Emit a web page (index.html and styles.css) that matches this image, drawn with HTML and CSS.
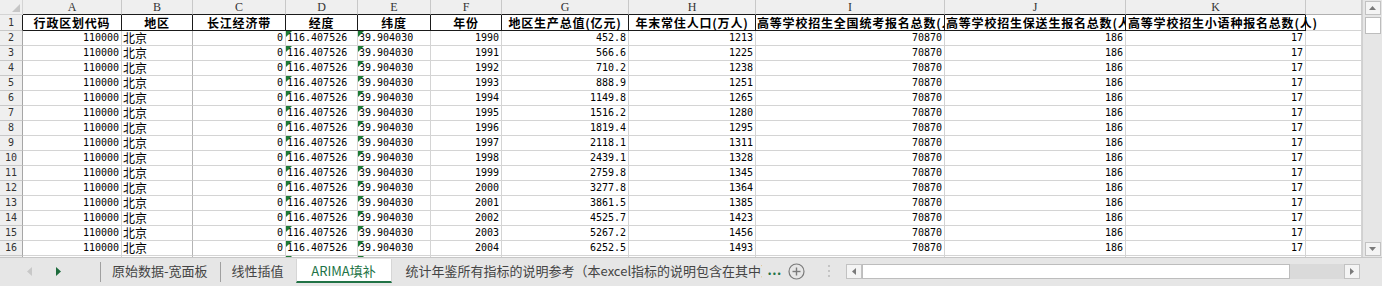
FILE: index.html
```html
<!DOCTYPE html>
<html lang="zh-CN">
<head>
    <meta charset="UTF-8">
    <title>ARIMA填补</title>
    <link rel="stylesheet" href="styles.css">
</head>
<body>
    <div class="workbook">
        <div class="sheet-area">
            <div class="sheet" id="sheet">
                <div class="corner"><span class="select-all"></span></div>
                <div class="col-head">A</div>
                <div class="col-head sep-dark">B</div>
                <div class="col-head">C</div>
                <div class="col-head">D</div>
                <div class="col-head">E</div>
                <div class="col-head">F</div>
                <div class="col-head">G</div>
                <div class="col-head">H</div>
                <div class="col-head">I</div>
                <div class="col-head">J</div>
                <div class="col-head">K</div>
                <div class="col-head col-last"></div>

                <div class="row-head row-first">1</div>
                <div class="title">行政区划代码</div>
                <div class="title">地区</div>
                <div class="title">长江经济带</div>
                <div class="title">经度</div>
                <div class="title">纬度</div>
                <div class="title">年份</div>
                <div class="title">地区生产总值(亿元)</div>
                <div class="title">年末常住人口(万人)</div>
                <div class="title title-clip">高等学校招生全国统考报名总数(人)</div>
                <div class="title title-clip">高等学校招生保送生报名总数(人)</div>
                <div class="title title-spill">高等学校招生小语种报名总数(人)</div>
                <div class="cell"></div>
            </div>

            <div class="vscroll">
                <div class="sb-btn">
                    <svg width="7" height="4" viewBox="0 0 7 4"><polygon points="0,4 7,4 3.5,0" fill="#7a7a7a"/></svg>
                </div>
                <div class="sb-thumb"></div>
                <div class="sb-track"></div>
                <div class="sb-btn">
                    <svg width="7" height="4" viewBox="0 0 7 4"><polygon points="0,0 7,0 3.5,4" fill="#7a7a7a"/></svg>
                </div>
            </div>
        </div>

        <div class="tabbar">
            <div class="tab-nav">
                <svg width="5" height="9" viewBox="0 0 5 9"><polygon points="5,0 5,9 0,4.5" fill="#c8c8c8"/></svg>
                <svg width="5" height="9" viewBox="0 0 5 9"><polygon points="0,0 0,9 5,4.5" fill="#1d6b3c"/></svg>
            </div>
            <div class="tab-sep"></div>
            <div class="tab">原始数据-宽面板</div>
            <div class="tab-sep"></div>
            <div class="tab">线性插值</div>
            <div class="tab tab-active">ARIMA填补</div>
            <div class="tab tab-long">统计年鉴所有指标的说明参考（本excel指标的说明包含在其中）</div>
            <div class="tab-more">...</div>
            <div class="tab-add">
                <svg width="17" height="17" viewBox="0 0 17 17">
                    <circle cx="8.5" cy="8.5" r="7.5" fill="none" stroke="#7a7a7a" stroke-width="1.2"/>
                    <line x1="8.5" y1="4.5" x2="8.5" y2="12.5" stroke="#7a7a7a" stroke-width="1.4"/>
                    <line x1="4.5" y1="8.5" x2="12.5" y2="8.5" stroke="#7a7a7a" stroke-width="1.4"/>
                </svg>
            </div>
            <div class="tab-grip"><span></span><span></span><span></span></div>
            <div class="hscroll">
                <div class="sb-btn">
                    <svg width="4" height="7" viewBox="0 0 4 7"><polygon points="4,0 4,7 0,3.5" fill="#7a7a7a"/></svg>
                </div>
                <div class="hs-thumb"></div>
                <div class="hs-track"></div>
                <div class="sb-btn">
                    <svg width="4" height="7" viewBox="0 0 4 7"><polygon points="0,0 0,7 4,3.5" fill="#7a7a7a"/></svg>
                </div>
            </div>
        </div>
    </div>

    <script>
        // data rows 2..16 (北京 1990-2004), row 17 only peeks in under the tabs
        const gdp = ['452.8', '566.6', '710.2', '888.9', '1149.8', '1516.2', '1819.4', '2118.1',
                     '2439.1', '2759.8', '3277.8', '3861.5', '4525.7', '5267.2', '6252.5'];
        const pop = [1213, 1225, 1238, 1251, 1265, 1280, 1295, 1311, 1328, 1345, 1364, 1385, 1423, 1456, 1493];
        const sheet = document.getElementById('sheet');

        function addCell(cls, text) {
            const div = document.createElement('div');
            div.className = cls;
            div.textContent = text;
            sheet.appendChild(div);
        }

        gdp.forEach((value, i) => {
            addCell('row-head', i + 2);
            addCell('cell num', '110000');
            addCell('cell zh sep-dark', '北京');
            addCell('cell num', '0');
            addCell('cell flag', '116.407526');
            addCell('cell flag', '39.904030');
            addCell('cell num', 1990 + i);
            addCell('cell num', value);
            addCell('cell num', pop[i]);
            addCell('cell num', '70870');
            addCell('cell num', '186');
            addCell('cell num', '17');
            addCell('cell', '');
        });

        // partial row 17: gridlines and the green markers only
        ['row-head', 'cell', 'cell sep-dark', 'cell', 'cell flag', 'cell flag',
         'cell', 'cell', 'cell', 'cell', 'cell', 'cell', 'cell'].forEach(cls => addCell(cls, ''));
    </script>
</body>
</html>
```

FILE: styles.css
```css
/* Base */
* {
    margin: 0;
    padding: 0;
    box-sizing: border-box;
}

body {
    width: 1382px;
    height: 286px;
    overflow: hidden;
    background: #e6e6e6;
    font-family: 'Noto Sans CJK SC', sans-serif;
}

.workbook {
    display: flex;
    flex-direction: column;
    height: 286px;
}

/* Sheet grid */
.sheet-area {
    display: flex;
    height: 258px;
    border-bottom: 1px solid #c6c6c6;
}

.sheet {
    width: 1362px;
    overflow: hidden;
    background: #fff;
    display: grid;
    grid-template-columns: 23px 99px 71px 93px 72px 73px 71px 127px 127px 189px 181px 180px 56px;
    grid-template-rows: 15px 16px;
    grid-auto-rows: 15px;
}

.sheet > div {
    border-right: 1px solid #d4d4d4;
    border-bottom: 1px solid #d4d4d4;
    white-space: nowrap;
}

.corner {
    position: relative;
    background: #efefef;
}

.corner .select-all {
    position: absolute;
    right: 2px;
    bottom: 2px;
    width: 0;
    height: 0;
    border-left: 8px solid transparent;
    border-bottom: 8px solid #c6c6c6;
}

.sheet > .col-head {
    background: #efefef;
    border-right-color: #c8c8c8;
    border-bottom-color: #1a1a1a;
    text-align: center;
    font-family: 'Liberation Serif', serif;
    font-size: 12px;
    line-height: 14px;
    color: #333;
}

.sheet > .col-last {
    border-bottom-color: #b0b0b0;
}

.sheet > .row-head {
    background: #efefef;
    border-right-color: #a6a6a6;
    border-bottom-color: #c8c8c8;
    text-align: center;
    font-family: 'DejaVu Sans Mono', monospace;
    font-size: 10px;
    line-height: 14px;
    color: #333;
}

.sheet > .row-first {
    line-height: 15px;
    border-right-color: #1a1a1a;
}

/* Header row 1 */
.sheet > .title {
    border-right-color: #1a1a1a;
    border-bottom-color: #1a1a1a;
    text-align: center;
    font-weight: bold;
    font-size: 12px;
    letter-spacing: 0.8px;
    line-height: 15px;
    color: #000;
}

.sheet > .title-clip {
    text-align: left;
    padding-left: 1px;
    overflow: hidden;
}

.sheet > .title-spill {
    text-align: left;
    padding-left: 2px;
}

/* Data cells */
.cell {
    font-size: 12px;
    line-height: 14px;
    color: #000;
}

.num {
    text-align: right;
    padding-right: 2px;
    font-family: 'DejaVu Sans Mono', monospace;
    font-size: 10px;
}

.zh {
    padding-left: 1px;
}

.flag {
    position: relative;
    padding-left: 1px;
    font-family: 'DejaVu Sans Mono', monospace;
    font-size: 10px;
}

.flag::before {
    content: '';
    position: absolute;
    top: 0;
    left: 0;
    border-top: 6px solid #1d7a34;
    border-right: 6px solid transparent;
}

.sheet > .sep-dark {
    border-right-color: #b4b4b4;
}

.sheet > .col-head.sep-dark {
    border-right-color: #c8c8c8;
}

/* Scrollbars */
.vscroll {
    width: 20px;
    display: flex;
    flex-direction: column;
    align-items: center;
    padding: 1px 0;
    background: #e6e6e6;
    border-left: 1px solid #d0d0d0;
}

.sb-btn {
    width: 16px;
    height: 14px;
    display: flex;
    align-items: center;
    justify-content: center;
    background: #f4f4f4;
    border: 1px solid #c2c2c2;
}

.sb-thumb {
    width: 16px;
    height: 17px;
    margin-top: 2px;
    background: #fff;
    border: 1px solid #bdbdbd;
}

.sb-track {
    flex: 1;
}

/* Sheet tabs */
.tabbar {
    display: flex;
    align-items: flex-start;
    height: 27px;
    padding-top: 1px;
    font-size: 13px;
    color: #444;
}

.tab-nav {
    width: 100px;
    height: 24px;
    display: flex;
    align-items: center;
    gap: 24px;
    padding-left: 27px;
}

.tab-sep {
    width: 1px;
    height: 20px;
    margin-top: 3px;
    background: #a0a0a0;
}

.tab {
    height: 24px;
    line-height: 23px;
    padding: 0 12px 0 11px;
    white-space: nowrap;
}

.tab-active {
    width: 96px;
    text-align: center;
    padding: 0;
    background: #fff;
    color: #217346;
    border-bottom: 2px solid #217346;
    border-left: 1px solid #d6d6d6;
    border-right: 1px solid #d6d6d6;
}

.tab-long {
    width: 370px;
    overflow: hidden;
    padding-left: 14px;
    padding-right: 0;
}

.tab-more {
    width: 26px;
    line-height: 22px;
    padding-left: 6px;
    font-weight: bold;
    color: #217346;
    letter-spacing: 0.5px;
}

.tab-add {
    width: 26px;
    height: 24px;
    display: flex;
    align-items: center;
}

.tab-grip {
    width: 32px;
    height: 24px;
    display: flex;
    flex-direction: column;
    justify-content: center;
    gap: 3px;
    padding-left: 14px;
}

.tab-grip span {
    width: 2px;
    height: 2px;
    background: #c4c4c4;
}

.hscroll {
    width: 514px;
    height: 15px;
    margin-top: 5px;
    display: flex;
    background: #dadada;
}

.hscroll .sb-btn {
    width: 16px;
    height: 15px;
}

.hs-thumb {
    width: 428px;
    background: #fff;
    border: 1px solid #bdbdbd;
}

.hs-track {
    flex: 1;
}
```
